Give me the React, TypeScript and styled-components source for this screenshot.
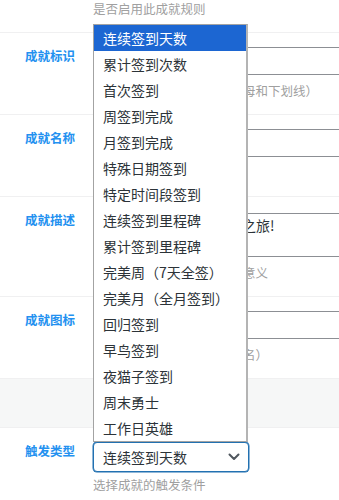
import React from 'react';
import styled, { createGlobalStyle } from 'styled-components';

const GlobalStyle = createGlobalStyle`
  html, body {
    margin: 0;
    padding: 0;
    background: #fff;
    overflow: hidden;
  }
  body {
    font-family: "Noto Sans CJK SC", "Liberation Sans", sans-serif;
    color: #2c3338;
  }
`;

const Table = styled.div`
  display: flex;
  flex-direction: column;
  width: 339px;
`;

const Row = styled.div<{ $band?: boolean }>`
  display: grid;
  grid-template-columns: 93px 1fr;
  border-bottom: 1px solid #f0f0f1;
  background: ${(p) => (p.$band ? '#f6f7f7' : '#fff')};
  min-height: ${(p) => (p.$band ? '49px' : 'auto')};
  box-sizing: border-box;
`;

const TopRow = styled(Row)`
  padding-bottom: 14px;
`;

const LabelCell = styled.div`
  padding: 14px 0 14px 25px;
  font-size: 12.5px;
  line-height: 18px;
  font-weight: 700;
  color: #2391f0;
  white-space: nowrap;
`;

const FieldCell = styled.div`
  padding: 14px 0;
  min-width: 0;
`;

const TopCell = styled.div`
  grid-column: 2;
`;

const Description = styled.p<{ $gap?: number }>`
  margin: ${(p) => p.$gap ?? 7}px 0 0;
  font-size: 12.5px;
  line-height: 18px;
  color: #a0a0a0;
  white-space: nowrap;
`;

const TextInput = styled.input`
  display: block;
  box-sizing: border-box;
  width: 420px;
  height: 28px;
  padding: 0 8px;
  border: 1px solid #8c8f94;
  border-radius: 4px;
  font-family: inherit;
  font-size: 14px;
  color: #2c3338;
  background: #fff;
  outline: none;
`;

const TextArea = styled.textarea`
  display: block;
  box-sizing: border-box;
  width: 420px;
  height: 44px;
  margin: 2px 0 4px;
  padding: 1px 8px;
  border: 1px solid #8c8f94;
  border-radius: 4px;
  font-family: inherit;
  font-size: 14px;
  line-height: 1.45;
  color: #2c3338;
  resize: none;
  outline: none;
`;

const SelectWrap = styled.div`
  position: relative;
  width: 156px;
`;

const SelectBox = styled.div`
  box-sizing: border-box;
  height: 30px;
  display: flex;
  align-items: center;
  justify-content: space-between;
  padding: 0 8px 0 9px;
  border: 1px solid #2271b1;
  border-radius: 4px;
  box-shadow: 0 0 0 0.5px #2271b1;
  font-size: 14px;
  color: #2c3338;
  background: #fff;
`;

const OptionList = styled.ul`
  position: absolute;
  left: 0;
  bottom: 100%;
  width: 155px;
  box-sizing: border-box;
  margin: 0;
  padding: 0;
  list-style: none;
  background: #fff;
  border: 1px solid #a3a3a3;
  border-right: 2px solid #b4b4b4;
  z-index: 5;
`;

const OptionItem = styled.li<{ $selected?: boolean }>`
  height: 26px;
  line-height: 26px;
  padding-left: 9px;
  font-size: 14px;
  white-space: nowrap;
  color: ${(p) => (p.$selected ? '#fff' : '#2c3338')};
  background: ${(p) => (p.$selected ? '#1c66d2' : 'transparent')};
`;

const Chevron = () => (
  <svg width="12" height="8" viewBox="0 0 12 8" fill="none">
    <path d="M1.5 1.5 6 6l4.5-4.5" stroke="#50575e" strokeWidth="2" strokeLinecap="round" strokeLinejoin="round" />
  </svg>
);

const triggerTypes = [
  '连续签到天数',
  '累计签到次数',
  '首次签到',
  '周签到完成',
  '月签到完成',
  '特殊日期签到',
  '特定时间段签到',
  '连续签到里程碑',
  '累计签到里程碑',
  '完美周（7天全签）',
  '完美月（全月签到）',
  '回归签到',
  '早鸟签到',
  '夜猫子签到',
  '周末勇士',
  '工作日英雄',
];

export default function App() {
  const selected = triggerTypes[0];

  return (
    <>
      <GlobalStyle />
      <Table>
        <TopRow>
          <TopCell>
            <Description $gap={0}>是否启用此成就规则</Description>
          </TopCell>
        </TopRow>

        <Row>
          <LabelCell>成就标识</LabelCell>
          <FieldCell>
            <TextInput readOnly value="streak_7_days" />
            <Description>唯一标识（只能使用英文字母和下划线）</Description>
          </FieldCell>
        </Row>

        <Row>
          <LabelCell>成就名称</LabelCell>
          <FieldCell>
            <TextInput readOnly value="坚持不懈" />
            <Description>显示给用户的名称</Description>
          </FieldCell>
        </Row>

        <Row>
          <LabelCell>成就描述</LabelCell>
          <FieldCell>
            <TextArea readOnly value="恭喜你开启了坚持签到之旅!" />
            <Description>描述成就的获得条件或激励意义</Description>
          </FieldCell>
        </Row>

        <Row>
          <LabelCell>成就图标</LabelCell>
          <FieldCell>
            <TextInput readOnly value="dashicons-awards" />
            <Description>填写图标的地址（或图标类名）</Description>
          </FieldCell>
        </Row>

        <Row $band />

        <Row>
          <LabelCell>触发类型</LabelCell>
          <FieldCell>
            <SelectWrap>
              <OptionList>
                {triggerTypes.map((t) => (
                  <OptionItem key={t} $selected={t === selected}>
                    {t}
                  </OptionItem>
                ))}
              </OptionList>
              <SelectBox>
                <span>{selected}</span>
                <Chevron />
              </SelectBox>
            </SelectWrap>
            <Description $gap={4}>选择成就的触发条件</Description>
          </FieldCell>
        </Row>
      </Table>
    </>
  );
}
